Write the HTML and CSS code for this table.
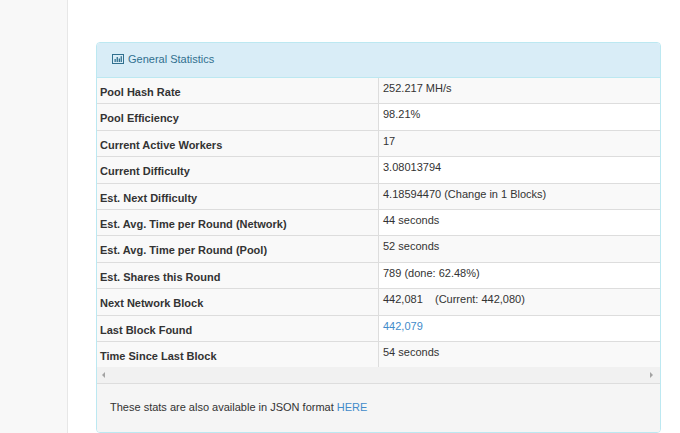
FILE: index.html
```html
<!DOCTYPE html>
<html>
<head>
<meta charset="utf-8">
<link rel="stylesheet" href="styles.css">
</head>
<body>
<div class="layout">
  <aside class="sidebar"></aside>
  <main class="main">
    <section class="panel">
      <div class="panel-heading">
        <svg class="icon" width="12" height="10" viewBox="0 0 12 10">
          <rect x="0.5" y="0.5" width="11" height="9" fill="none" stroke="#31708f" stroke-width="1"/>
          <rect x="2.5" y="5" width="1.3" height="3" fill="#31708f"/>
          <rect x="4.6" y="3" width="1.3" height="5" fill="#31708f"/>
          <rect x="6.7" y="4.5" width="1.3" height="3.5" fill="#31708f"/>
          <rect x="8.6" y="2.2" width="1.3" height="5.8" fill="#31708f"/>
        </svg>
        <span>General Statistics</span>
      </div>
      <table class="stats">
        <colgroup><col class="col-half"><col class="col-half"></colgroup>
        <tbody>
          <tr><th>Pool Hash Rate</th><td>252.217 MH/s</td></tr>
          <tr><th>Pool Efficiency</th><td>98.21%</td></tr>
          <tr><th>Current Active Workers</th><td>17</td></tr>
          <tr><th>Current Difficulty</th><td>3.08013794</td></tr>
          <tr><th>Est. Next Difficulty</th><td>4.18594470 (Change in 1 Blocks)</td></tr>
          <tr><th>Est. Avg. Time per Round (Network)</th><td>44 seconds</td></tr>
          <tr><th>Est. Avg. Time per Round (Pool)</th><td>52 seconds</td></tr>
          <tr><th>Est. Shares this Round</th><td>789 (done: 62.48%)</td></tr>
          <tr><th>Next Network Block</th><td>442,081 &nbsp;&nbsp; (Current: 442,080)</td></tr>
          <tr><th>Last Block Found</th><td><a class="link" href="#">442,079</a></td></tr>
          <tr><th>Time Since Last Block</th><td>54 seconds</td></tr>
        </tbody>
      </table>
      <div class="hscroll">
        <span class="arrow-left"></span>
        <span class="arrow-right"></span>
      </div>
      <div class="panel-footer">
        These stats are also available in JSON format <a class="link" href="#">HERE</a>
      </div>
    </section>
  </main>
</div>
</body>
</html>
```

FILE: styles.css
```css
html, body {
  margin: 0;
  padding: 0;
  background: #ffffff;
  font-family: "Liberation Sans", Arial, sans-serif;
  font-size: 11px;
  color: #333333;
}

.layout {
  display: flex;
  min-height: 433px;
}

.sidebar {
  width: 67px;
  flex: none;
  background: #f8f8f8;
  border-right: 1px solid #e7e7e7;
}

.main {
  flex: 1;
  padding: 42px 19px 0 28px;
}

.panel {
  border: 1px solid #bce8f1;
  border-radius: 4px;
  overflow: hidden;
  background: #ffffff;
}

.panel-heading {
  height: 35px;
  box-sizing: border-box;
  padding: 9px 15px 11px;
  background: #d9edf7;
  border-bottom: 1px solid #bce8f1;
  color: #31708f;
  line-height: 14px;
  display: flex;
  align-items: center;
  gap: 4px;
}

.icon {
  display: block;
  flex: none;
  margin-top: -1px;
}

.stats {
  width: 100%;
  border-collapse: collapse;
  table-layout: fixed;
}

.col-half {
  width: 50%;
}

.stats tr + tr th,
.stats tr + tr td {
  border-top: 1px solid #dddddd;
}

.stats th {
  text-align: left;
  font-weight: bold;
  vertical-align: bottom;
  padding: 7px 3px 3px;
  line-height: 15.4px;
  background: #f9f9f9;
  white-space: nowrap;
}

.stats td {
  vertical-align: top;
  padding: 3px 4px 7px;
  line-height: 15.4px;
  border-left: 1px solid #dddddd;
  white-space: nowrap;
}

.stats tr:nth-child(odd) td {
  background: #f9f9f9;
}

.link {
  color: #428bca;
  text-decoration: none;
}

.hscroll {
  height: 16px;
  background: #f1f1f1;
  display: flex;
  align-items: center;
  justify-content: space-between;
  padding: 0 7px 0 5px;
}

.arrow-left {
  width: 0;
  height: 0;
  border-top: 3.5px solid transparent;
  border-bottom: 3.5px solid transparent;
  border-right: 3.5px solid #a3a3a3;
}

.arrow-right {
  width: 0;
  height: 0;
  border-top: 3.5px solid transparent;
  border-bottom: 3.5px solid transparent;
  border-left: 3.5px solid #a3a3a3;
}

.panel-footer {
  border-top: 1px solid #dddddd;
  background: #f5f5f5;
  padding: 15px 13px 17px;
  line-height: 16px;
}
```
